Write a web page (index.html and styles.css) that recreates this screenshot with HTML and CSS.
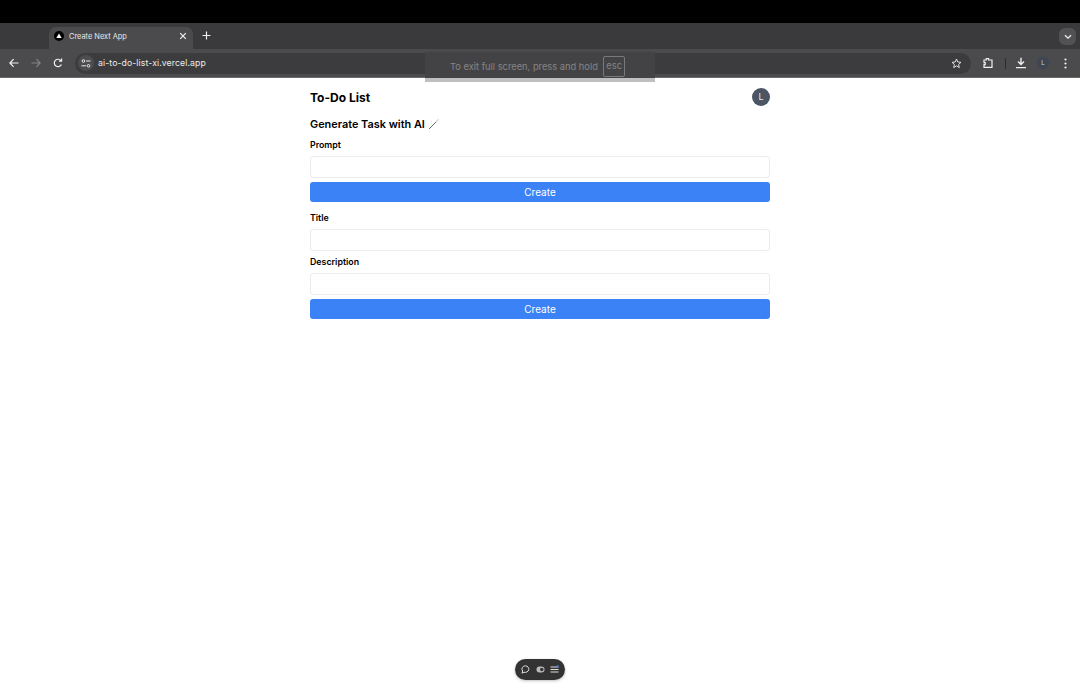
FILE: index.html
```html
<!DOCTYPE html>
<html lang="en">

<head>
    <meta charset="UTF-8">
    <title>Create Next App</title>
    <link rel="stylesheet" href="styles.css">
</head>

<body>

    <div class="top-black"></div>

    <!-- Browser tab strip -->
    <div class="tab-strip">
        <div class="tab">
            <span class="favicon">
                <svg width="10" height="10" viewBox="0 0 10 10"><circle cx="5" cy="5" r="5" fill="#000"/><path d="M5 2.6 L7.7 7 H2.3 Z" fill="#fff"/></svg>
            </span>
            <span class="tab-title">Create Next App</span>
            <svg class="tab-close" width="8" height="8" viewBox="0 0 8 8"><path d="M1.2 1.2 L6.8 6.8 M6.8 1.2 L1.2 6.8" stroke="#f0f0f0" stroke-width="1.2"/></svg>
        </div>
        <svg class="new-tab" width="9" height="9" viewBox="0 0 9 9"><path d="M4.5 .5 V8.5 M.5 4.5 H8.5" stroke="#efefef" stroke-width="1.2"/></svg>
        <div class="tab-menu">
            <svg width="8" height="6" viewBox="0 0 8 6"><path d="M1 1.2 L4 4.2 L7 1.2" fill="none" stroke="#f0f0f0" stroke-width="1.3"/></svg>
        </div>
    </div>

    <!-- Browser toolbar -->
    <div class="toolbar">
        <svg class="nav-icon" width="10" height="10" viewBox="0 0 10 10"><path d="M9.5 5 H1 M4.6 1.2 L.9 5 L4.6 8.8" fill="none" stroke="#f0f0f0" stroke-width="1.2"/></svg>
        <svg class="nav-icon" width="10" height="10" viewBox="0 0 10 10"><path d="M.5 5 H9 M5.4 1.2 L9.1 5 L5.4 8.8" fill="none" stroke="#858587" stroke-width="1.2"/></svg>
        <svg class="nav-icon" width="10" height="10" viewBox="0 0 10 10"><path d="M8.4 6.4 A3.7 3.7 0 1 1 8 2.8 M8.6 .6 V3.2 H6" fill="none" stroke="#f0f0f0" stroke-width="1.2"/></svg>
        <div class="address-bar">
            <span class="site-settings">
                <svg width="10" height="9" viewBox="0 0 10 9"><circle cx="2.4" cy="2" r="1.3" fill="none" stroke="#e8e8e8"/><path d="M5 2 H9.5 M.5 6.8 H5" stroke="#e8e8e8"/><circle cx="7.5" cy="6.8" r="1.3" fill="none" stroke="#e8e8e8"/></svg>
            </span>
            <span class="url">ai-to-do-list-xi.vercel.app</span>
            <svg class="star" width="11" height="11" viewBox="0 0 11 11"><path d="M5.5 1 L6.8 4 L10 4.3 L7.6 6.4 L8.3 9.6 L5.5 7.9 L2.7 9.6 L3.4 6.4 L1 4.3 L4.2 4 Z" fill="none" stroke="#e0e0e0" stroke-width="1"/></svg>
        </div>
        <svg class="ext" width="12" height="12" viewBox="0 0 12 12"><path d="M2 3 H4.2 V1.6 H6.6 V3 H10 V10.4 H2 V7.6 H3.2 V5.6 H2 Z" fill="none" stroke="#f0f0f0" stroke-width="1.2"/></svg>
        <span class="divider"></span>
        <svg class="download" width="12" height="12" viewBox="0 0 12 12"><path d="M6 .8 V7 M3 4.4 L6 7.4 L9 4.4 M1 10.6 H11" fill="none" stroke="#f0f0f0" stroke-width="1.4"/></svg>
        <span class="profile">L</span>
        <svg class="kebab" width="3" height="11" viewBox="0 0 3 11"><circle cx="1.5" cy="1.5" r="1.1" fill="#f0f0f0"/><circle cx="1.5" cy="5.5" r="1.1" fill="#f0f0f0"/><circle cx="1.5" cy="9.5" r="1.1" fill="#f0f0f0"/></svg>
    </div>

    <!-- Full screen notice over the toolbar -->
    <div class="fullscreen-notice">
        <span>To exit full screen, press and hold</span>
        <span class="esc-key">esc</span>
    </div>

    <!-- Page -->
    <div class="page">
        <div class="header">
            <h1>To-Do List</h1>
            <span class="avatar">L</span>
        </div>

        <h2>Generate Task with AI <svg class="wand" width="12" height="12" viewBox="0 0 12 12"><path d="M1 11 L8.4 3.6" stroke="#666" stroke-width="1"/><path d="M8.6 3.4 L10.6 1.4" stroke="#d0d0d0" stroke-width="1.2"/></svg></h2>

        <form class="task-form">
            <label for="prompt">Prompt</label>
            <input type="text" id="prompt">
            <button type="button">Create</button>
        </form>

        <form class="task-form">
            <label for="title">Title</label>
            <input type="text" id="title">
            <label for="description" class="second-label">Description</label>
            <input type="text" id="description">
            <button type="button">Create</button>
        </form>
    </div>

    <!-- Floating dev toolbar -->
    <div class="float-bar">
        <svg width="9" height="9" viewBox="0 0 9 9"><path d="M4.5 .8 A3.6 3.3 0 1 1 3 7.2 L1 8.2 L1.6 6 A3.6 3.3 0 0 1 4.5 .8 Z" fill="none" stroke="#f0f0f0" stroke-width=".9"/></svg>
        <svg width="9" height="9" viewBox="0 0 9 9"><rect x=".5" y="1.5" width="8" height="6" rx="3" fill="#bbb"/><circle cx="5.8" cy="4.5" r="1.7" fill="#333"/></svg>
        <svg width="9" height="9" viewBox="0 0 9 9"><path d="M.5 2 H8.5 M.5 4.5 H8.5 M.5 7 H8.5" stroke="#f0f0f0" stroke-width=".9"/><circle cx="7.6" cy="1.4" r="1.1" fill="#3b82f6"/></svg>
    </div>

</body>

</html>
```

FILE: styles.css
```css
html,
body {
    height: 698px;
    overflow: hidden;
}

body {
    margin: 0;
    position: relative;
    background-color: #fff;
    color: #000;
    font-family: Inter, 'Liberation Sans', sans-serif;
}

.top-black {
    height: 23px;
    background-color: #000;
}

/* Tab strip */
.tab-strip {
    display: flex;
    align-items: flex-end;
    height: 26px;
    padding-left: 49px;
    background-color: #3a3a3c;
}

.tab {
    display: flex;
    align-items: center;
    width: 144px;
    height: 22px;
    box-sizing: border-box;
    padding: 0 6px 4px 5px;
    background-color: #4b4b4d;
    border-radius: 7px 7px 0 0;
}

.favicon {
    display: flex;
    margin-right: 5px;
}

.tab-title {
    flex: 1;
    font-size: 7.4px;
    color: #e6e6e6;
}

.new-tab {
    margin: 0 0 9px 9px;
}

.tab-menu {
    display: flex;
    align-items: center;
    justify-content: center;
    width: 17px;
    height: 17px;
    margin: 0 4px 4px auto;
    background-color: #525254;
    border-radius: 6px;
}

/* Toolbar */
.toolbar {
    display: flex;
    align-items: center;
    height: 29px;
    box-sizing: border-box;
    padding: 0 12px 0 9px;
    background-color: #4b4b4d;
    border-bottom: 1px solid #6a6a6c;
}

.nav-icon {
    flex-shrink: 0;
    margin-right: 12px;
}

.address-bar {
    display: flex;
    align-items: center;
    flex-shrink: 0;
    width: 896px;
    height: 21px;
    margin-right: 11px;
    background-color: #3c3c3e;
    border-radius: 11px;
}

.site-settings {
    display: flex;
    align-items: center;
    justify-content: center;
    width: 16px;
    height: 16px;
    margin: 0 4px 0 3px;
    background-color: #4d4d4f;
    border-radius: 50%;
}

.url {
    flex: 1;
    font-size: 8.7px;
    letter-spacing: .1px;
    color: #ececec;
}

.star {
    margin-right: 9px;
}

.ext {
    flex-shrink: 0;
}

.divider {
    flex-shrink: 0;
    width: 1px;
    height: 11px;
    margin: 0 9px 0 11px;
    background-color: #2c2c2e;
}

.download {
    flex-shrink: 0;
}

.profile {
    flex-shrink: 0;
    width: 12px;
    height: 12px;
    margin: 0 15px 0 10px;
    line-height: 12px;
    text-align: center;
    font-size: 6px;
    color: #cfd6e0;
    background-color: #3d4654;
    border-radius: 50%;
}

.kebab {
    flex-shrink: 0;
}

/* Exit full screen notice */
.fullscreen-notice {
    position: absolute;
    top: 52px;
    left: 425px;
    display: flex;
    align-items: center;
    width: 230px;
    height: 30px;
    box-sizing: border-box;
    padding: 2px 0 0 25px;
    background-color: #434345;
    border-bottom: 4px solid #bfbfbf;
    font-size: 9.3px;
    color: #858587;
}

.esc-key {
    margin-left: 5px;
    padding: 0 2.5px;
    height: 21px;
    line-height: 18px;
    border: 1px solid #79797b;
    border-radius: 2px;
    box-sizing: border-box;
}

/* Page content */
.page {
    width: 460px;
    margin: 0 auto;
}

.header {
    display: flex;
    align-items: center;
    justify-content: space-between;
    height: 20px;
    padding-top: 9px;
}

h1 {
    margin: 0;
    font-size: 12px;
    font-weight: 700;
}

.avatar {
    width: 18px;
    height: 18px;
    line-height: 18px;
    text-align: center;
    font-size: 9px;
    color: #e8e8e8;
    background-color: #4b5563;
    border-radius: 50%;
}

h2 {
    display: flex;
    align-items: center;
    gap: 3px;
    height: 16px;
    margin: 9px 0 0 0;
    font-size: 10.9px;
    font-weight: 600;
}

.task-form {
    display: flex;
    flex-direction: column;
    margin-top: 7px;
}

.task-form + .task-form {
    margin-top: 10px;
}

label {
    height: 12px;
    line-height: 11px;
    margin-bottom: 5px;
    font-size: 8.8px;
    font-weight: 600;
}

.second-label {
    margin-top: 5px;
}

input[type="text"] {
    height: 22px;
    box-sizing: border-box;
    padding: 0 6px;
    border: 1px solid #ececf0;
    border-radius: 3px;
    background-color: #fff;
}

button {
    height: 20px;
    margin-top: 4px;
    padding: 0;
    background-color: #3b82f6;
    color: #fff;
    border: none;
    border-radius: 3px;
    font-family: inherit;
    font-size: 10px;
}

/* Floating bar at the bottom */
.float-bar {
    position: absolute;
    left: 515px;
    top: 659px;
    display: flex;
    align-items: center;
    justify-content: space-between;
    width: 50px;
    height: 21px;
    box-sizing: border-box;
    padding: 0 6px;
    background-color: #333;
    border-radius: 11px;
    box-shadow: 0 1px 3px rgba(0, 0, 0, 0.25);
}
```
